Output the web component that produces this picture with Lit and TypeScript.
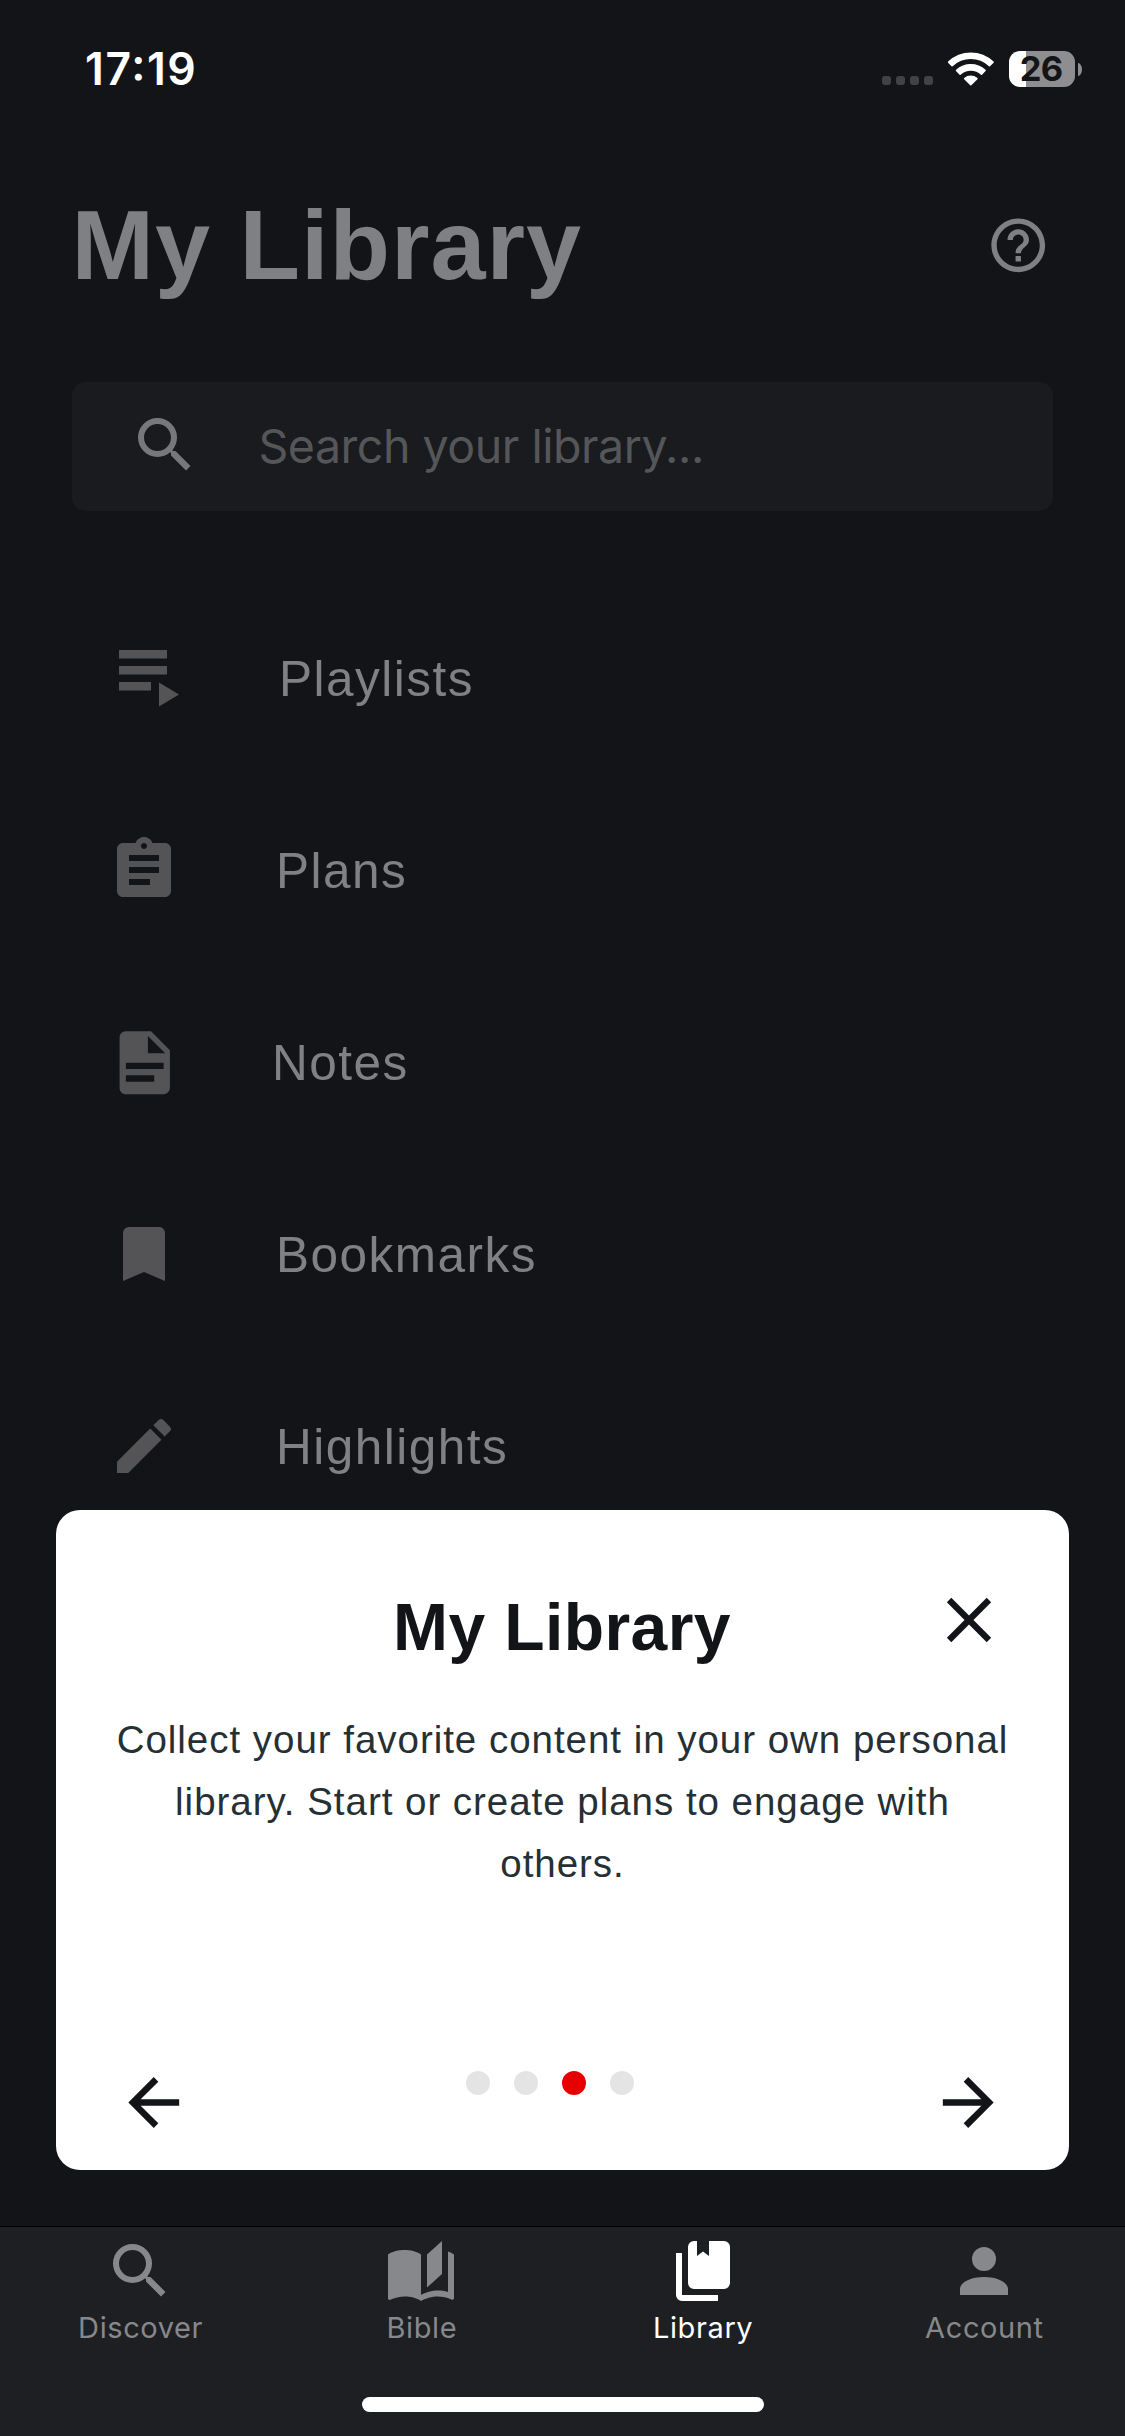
import { LitElement, html, css, svg } from "lit";
import { customElement, property } from "lit/decorators.js";
import { classMap } from "lit/directives/class-map.js";

const ICONS: Record<string, string> = {
  magnify:
    "M9.5,3A6.5,6.5 0 0,1 16,9.5C16,11.11 15.41,12.59 14.44,13.73L14.71,14H15.5L20.5,19L19,20.5L14,15.5V14.71L13.73,14.44C12.59,15.41 11.11,16 9.5,16A6.5,6.5 0 0,1 3,9.5A6.5,6.5 0 0,1 9.5,3M9.5,5C7,5 5,7 5,9.5C5,12 7,14 9.5,14C12,14 14,12 14,9.5C14,7 12,5 9.5,5Z",
  help: "M11 18h2v-2h-2v2zm1-16C6.48 2 2 6.48 2 12s4.48 10 10 10 10-4.48 10-10S17.52 2 12 2zm0 18c-4.41 0-8-3.59-8-8s3.59-8 8-8 8 3.59 8 8-3.59 8-8 8zm0-14c-2.21 0-4 1.79-4 4h2c0-1.1.9-2 2-2s2 .9 2 2c0 2-3 1.75-3 5h2c0-2.25 3-2.5 3-5 0-2.21-1.79-4-4-4z",
  playlist: "M4 10h12v2.15H4zM4 6h12v2.15H4zM4 14h8v2.15H4zM14 14.1v6l5-3z",
  clipboard:
    "M19 3h-4.18C14.4 1.84 13.3 1 12 1s-2.4.84-2.82 2H5c-1.1 0-2 .9-2 2v14c0 1.1.9 2 2 2h14c1.1 0 2-.9 2-2V5c0-1.1-.9-2-2-2zm-7 0c.55 0 1 .45 1 1s-.45 1-1 1-1-.45-1-1 .45-1 1-1zm2 14H7v-2h7v2zm3-4H7v-2h10v2zm0-4H7V7h10v2z",
  document:
    "M13,9H18.5L13,3.5V9M6,2H14L20,8V20A2,2 0 0,1 18,22H6C4.89,22 4,21.1 4,20V4C4,2.89 4.89,2 6,2M15,18V16H6V18H15M18,14V12H6V14H18Z",
  bookmark: "M17,3H7A2,2 0 0,0 5,5V21L12,18L19,21V5C19,3.89 18.1,3 17,3Z",
  pencil:
    "M20.71,7.04C21.1,6.65 21.1,6 20.71,5.63L18.37,3.29C18,2.9 17.35,2.9 16.96,3.29L15.12,5.12L18.87,8.87M3,17.25V21H6.75L17.81,9.93L14.06,6.18L3,17.25Z",
  close:
    "M19,6.41L17.59,5L12,10.59L6.41,5L5,6.41L10.59,12L5,17.59L6.41,19L12,13.41L17.59,19L19,17.59L13.41,12L19,6.41Z",
  back: "M20,11V13H8L13.5,18.5L12.08,19.92L4.16,12L12.08,4.08L13.5,5.5L8,11H20Z",
  next: "M4,11V13H16L10.5,18.5L11.92,19.92L19.84,12L11.92,4.08L10.5,5.5L16,11H4Z",
  bible:
    "M19 2L14 6.5V17.5L19 13V2M6.5 5C4.55 5 2.45 5.4 1 6.5V21.16C1 21.41 1.25 21.66 1.5 21.66C1.6 21.66 1.65 21.59 1.75 21.59C3.1 20.94 5.05 20.5 6.5 20.5C8.45 20.5 10.55 20.9 12 22C13.35 21.15 15.8 20.5 17.5 20.5C19.15 20.5 20.85 20.81 22.25 21.56C22.35 21.61 22.4 21.59 22.5 21.59C22.75 21.59 23 21.34 23 21.09V6.5C22.4 6.05 21.75 5.75 21 5.5V19C19.9 18.65 18.7 18.5 17.5 18.5C15.8 18.5 13.35 19.15 12 20V6.5C10.55 5.4 8.45 5 6.5 5Z",
  library:
    "M19 18H9A2 2 0 0 1 7 16V4A2 2 0 0 1 9 2H10V7L12 5.5L14 7V2H19A2 2 0 0 1 21 4V16A2 2 0 0 1 19 18M17 20V22H5A2 2 0 0 1 3 20V6H5V20Z",
  account:
    "M12,4A4,4 0 0,1 16,8A4,4 0 0,1 12,12A4,4 0 0,1 8,8A4,4 0 0,1 12,4M12,14C16.42,14 20,15.79 20,18V20H4V18C4,15.79 7.58,14 12,14Z",
};

@customElement("ui-icon")
class UiIcon extends LitElement {
  @property() name = "magnify";

  static styles = css`
    :host {
      display: block;
      flex: none;
      width: 72px;
      height: 72px;
    }
    .glyph {
      display: block;
      width: 100%;
      height: 100%;
      fill: currentColor;
    }
  `;

  render() {
    return html`<svg class="glyph" viewBox="0 0 24 24">${svg`<path d=${ICONS[this.name]}></path>`}</svg>`;
  }
}

@customElement("status-bar")
class StatusBar extends LitElement {
  static styles = css`
    :host {
      display: flex;
      align-items: center;
      justify-content: space-between;
      height: 138px;
      padding: 0 43px 0 85px;
      font-family: Inter, "Liberation Sans", sans-serif;
      color: #fff;
    }
    .time {
      font-size: 44.5px;
      font-weight: 600;
      line-height: 138px;
      letter-spacing: 1.6px;
      font-feature-settings: "case" 1;
    }
    .right {
      display: flex;
      align-items: center;
    }
    .cell {
      display: flex;
      gap: 5px;
      margin: 23px 15px 0 0;
    }
    .dot {
      width: 9px;
      height: 9px;
      border-radius: 3px;
      background: #414245;
    }
    .wifi {
      display: block;
      width: 46px;
      height: 34px;
      margin-right: 15px;
      fill: #fff;
      stroke: #fff;
      stroke-width: 1.6;
      stroke-linejoin: round;
    }
    .battery {
      width: 66px;
      height: 36px;
      border-radius: 11px;
      background: linear-gradient(to right, #fff 17px, #8e8e91 17px);
      color: #131418;
      font-size: 34.5px;
      font-weight: 700;
      line-height: 36px;
      text-align: center;
      letter-spacing: -0.8px;
      text-indent: -2px;
    }
    .nub {
      width: 4px;
      height: 13px;
      margin-left: 3px;
      border-radius: 0 4px 4px 0 / 0 6.5px 6.5px 0;
      background: #8e8e91;
    }
  `;

  render() {
    return html`
      <span class="time">17:19</span>
      <div class="right">
        <div class="cell">${[0, 1, 2, 3].map(() => html`<i class="dot"></i>`)}</div>
        <svg class="wifi" viewBox="0 0 46 34">
          <path d="M.6 10.1A32.2 32.2 0 0 1 45 10.1L41.5 13.7A27.2 27.2 0 0 0 4.1 13.7Z"></path>
          <path d="M8.6 18.4A20.7 20.7 0 0 1 37 18.4L33.5 22.1A15.6 15.6 0 0 0 12.1 22.1Z"></path>
          <path d="M16.7 26.6A9.5 9.5 0 0 1 28.9 26.6L22.8 32.6Z"></path>
        </svg>
        <div class="battery">26</div>
        <i class="nub"></i>
      </div>
    `;
  }
}

@customElement("tour-card")
class TourCard extends LitElement {
  static styles = css`
    :host {
      box-sizing: border-box;
      display: flex;
      flex-direction: column;
      padding-top: 79px;
      border-radius: 24px;
      background: #fff;
      color: #131418;
      font-family: "Liberation Sans", Arial, sans-serif;
    }
    .head {
      display: grid;
      grid-template-columns: 76px 1fr 76px;
      padding: 0 62.5px 0 61.5px;
    }
    .title {
      grid-column: 2;
      margin: 0;
      font-size: 66px;
      font-weight: 700;
      line-height: 76px;
      letter-spacing: 0.4px;
      text-align: center;
    }
    .close {
      width: 76px;
      height: 76px;
      margin-top: -7px;
    }
    .copy {
      margin: 44px 50px 0;
      color: #263034;
      font-size: 38.5px;
      line-height: 62.2px;
      letter-spacing: 0.97px;
      text-align: center;
    }
    .foot {
      display: flex;
      align-items: center;
      justify-content: space-between;
      margin-top: auto;
      padding: 0 62px 29px 59px;
    }
    .arrow {
      width: 77px;
      height: 77px;
    }
    .dots {
      display: flex;
      gap: 24px;
      margin: 0 22px 39px 0;
    }
    .dot {
      width: 24px;
      height: 24px;
      border-radius: 50%;
      background: #e4e4e4;
    }
    .dot.on {
      background: #e80000;
    }
  `;

  render() {
    return html`
      <div class="head">
        <h2 class="title">My Library</h2>
        <ui-icon class="close" name="close"></ui-icon>
      </div>
      <p class="copy">
        Collect your favorite content in your own personal<br />library. Start or create plans to engage with<br />others.
      </p>
      <div class="foot">
        <ui-icon class="arrow" name="back"></ui-icon>
        <div class="dots">
          ${[0, 1, 2, 3].map((i) => html`<i class=${classMap({ dot: true, on: i === 2 })}></i>`)}
        </div>
        <ui-icon class="arrow" name="next"></ui-icon>
      </div>
    `;
  }
}

const MENU = [
  { icon: "playlist", label: "Playlists" },
  { icon: "clipboard", label: "Plans" },
  { icon: "document", label: "Notes" },
  { icon: "bookmark", label: "Bookmarks" },
  { icon: "pencil", label: "Highlights" },
];

const TABS = [
  { icon: "magnify", label: "Discover" },
  { icon: "bible", label: "Bible" },
  { icon: "library", label: "Library" },
  { icon: "account", label: "Account" },
];

@customElement("app-root")
class AppRoot extends LitElement {
  static styles = css`
    :host {
      position: relative;
      display: flex;
      flex-direction: column;
      width: 1125px;
      height: 2436px;
      overflow: hidden;
      background: #131418;
      font-family: "Liberation Sans", Arial, sans-serif;
    }
    .page {
      flex: 1;
      min-height: 0;
    }
    .header {
      display: flex;
      align-items: center;
      justify-content: space-between;
      height: 214px;
      padding: 0 74.5px 0 71.5px;
      color: #7f8083;
    }
    .heading {
      margin: 0;
      font-size: 99px;
      font-weight: 700;
      line-height: 110px;
      letter-spacing: 1px;
    }
    .help {
      width: 64.5px;
      height: 64.5px;
    }
    .search {
      display: flex;
      align-items: center;
      height: 129px;
      margin: 30px 72px 0;
      padding-left: 56.5px;
      box-sizing: border-box;
      border-radius: 14px;
      background: #1a1b1e;
      color: #77787b;
    }
    .search ui-icon {
      margin-top: -3px;
    }
    .placeholder {
      margin-left: 58px;
      color: #555659;
      font-family: Inter, "Liberation Sans", sans-serif;
      font-size: 46.5px;
      line-height: 129px;
      letter-spacing: -0.47px;
    }
    .menu {
      margin: 71px 0 0;
      padding: 0;
      list-style: none;
    }
    .row {
      display: flex;
      align-items: center;
      height: 192px;
      padding-left: 108px;
      color: #545456;
    }
    .row ui-icon {
      margin-right: 96px;
    }
    .label {
      color: #808183;
      font-size: 49.5px;
      letter-spacing: 1.5px;
    }
    .row .playlist {
      width: 96px;
      height: 96px;
      margin: -8px 80px 0 -5px;
    }
    .row .document {
      width: 75.5px;
      height: 75.5px;
      margin: 1px 90px 0 -1.5px;
    }
    .tour {
      position: absolute;
      left: 56px;
      top: 1510px;
      width: 1013px;
      height: 660px;
    }
    .tabs {
      display: grid;
      grid-template-columns: repeat(4, 1fr);
      align-content: start;
      height: 210px;
      box-sizing: border-box;
      padding-top: 8px;
      border-top: 1px solid #000;
      background: #1e1f22;
      color: #87888b;
      font-family: Inter, "Liberation Sans", sans-serif;
    }
    .tab {
      display: flex;
      flex-direction: column;
      align-items: center;
      font-size: 29px;
      line-height: 40px;
      letter-spacing: 0.6px;
    }
    .tab ui-icon {
      margin: 0 1.2px 1px 0;
    }
    .tab.active {
      color: #fff;
    }
    .home {
      grid-column: 1 / -1;
      justify-self: center;
      width: 402px;
      height: 15px;
      margin-top: 49px;
      border-radius: 8px;
      background: #fff;
    }
  `;

  render() {
    return html`
      <main class="page">
        <status-bar></status-bar>
        <header class="header">
          <h1 class="heading">My Library</h1>
          <ui-icon class="help" name="help"></ui-icon>
        </header>
        <div class="search">
          <ui-icon name="magnify"></ui-icon>
          <span class="placeholder">Search your library...</span>
        </div>
        <ul class="menu">
          ${MENU.map(
            (m) => html`<li class="row">
              <ui-icon class=${m.icon} name=${m.icon}></ui-icon>
              <span class="label">${m.label}</span>
            </li>`
          )}
        </ul>
      </main>
      <nav class="tabs">
        ${TABS.map(
          (t) => html`<div class=${classMap({ tab: true, active: t.icon === "library" })}>
            <ui-icon name=${t.icon}></ui-icon>
            <span>${t.label}</span>
          </div>`
        )}
        <i class="home"></i>
      </nav>
      <tour-card class="tour"></tour-card>
    `;
  }
}
